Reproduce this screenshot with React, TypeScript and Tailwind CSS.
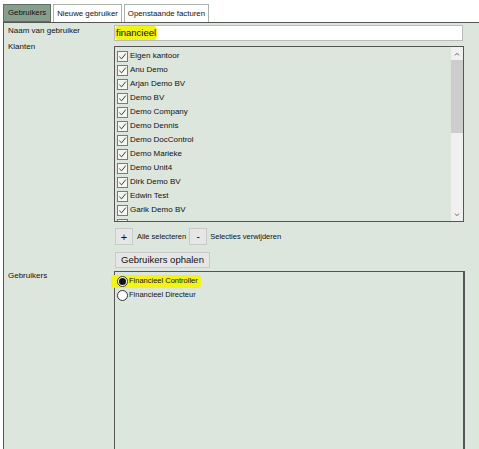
import React from 'react';

const klanten = [
  'Eigen kantoor',
  'Anu Demo',
  'Arjan Demo BV',
  'Demo BV',
  'Demo Company',
  'Demo Dennis',
  'Demo DocControl',
  'Demo Marieke',
  'Demo Unit4',
  'Dirk Demo BV',
  'Edwin Test',
  'Garik Demo BV',
];

function CheckBox() {
  return (
    <span className="flex h-[11px] w-[11px] shrink-0 items-center justify-center border border-[#7a7a7a] bg-[#f4f6f4]">
      <svg viewBox="0 0 10 10" className="h-[9px] w-[9px]">
        <path d="M1.5 5.2 L4 7.6 L8.6 1.8" fill="none" stroke="#3a3a3a" strokeWidth="1.1" />
      </svg>
    </span>
  );
}

function Radio({ checked }: { checked?: boolean }) {
  return (
    <span className="flex h-[11px] w-[11px] shrink-0 items-center justify-center rounded-full border border-[#333] bg-white">
      {checked && <span className="h-[7px] w-[7px] rounded-full bg-[#111]" />}
    </span>
  );
}

export default function App() {
  return (
    <div
      className="h-[449px] w-[479px] overflow-hidden bg-white text-[8px] leading-[12px] text-[#111]"
      style={{ fontFamily: '"Liberation Sans", Arial, sans-serif' }}
    >
      {/* tabs */}
      <div className="flex items-end gap-[2px] pl-[3px] pt-[4px] text-[7.8px]">
        <div className="flex h-[18px] items-center border border-[#5f6f62] bg-[#879e8c] px-[4px]">
          Gebruikers
        </div>
        <div className="flex h-[18px] items-center border border-b-0 border-[#a9b3aa] bg-white px-[3px]">
          Nieuwe gebruiker
        </div>
        <div className="flex h-[18px] items-center border border-b-0 border-[#a9b3aa] bg-white px-[3px]">
          Openstaande facturen
        </div>
      </div>

      {/* panel */}
      <div className="ml-[3px] flex h-[430px] flex-col border-l border-t border-[#555] bg-[#dce6dc] pt-[2px]">
        {/* naam */}
        <div className="flex">
          <div className="w-[110px] pl-[4px]">Naam van gebruiker</div>
          <div className="flex h-[16px] w-[349px] items-center border border-[#b8bcb8] bg-white">
            <span className="rounded-[4px] bg-[#f3f316] px-[1px] text-[9.5px] leading-[14px]">financieel</span>
          </div>
        </div>

        {/* klanten */}
        <div className="mt-[5px] flex">
          <div className="-mt-[5px] w-[110px] pl-[4px]">Klanten</div>
          <div className="flex h-[176px] w-[350px] border border-[#555] bg-[#dce6dc]">
            <div className="flex flex-1 flex-col overflow-hidden pl-[2px] pt-[2px]">
              {klanten.map((k) => (
                <div key={k} className="flex h-[14px] shrink-0 items-center gap-[2px]">
                  <CheckBox />
                  <span>{k}</span>
                </div>
              ))}
              <div className="flex h-[14px] shrink-0 items-center">
                <CheckBox />
              </div>
            </div>
            <div className="flex w-[12px] flex-col bg-[#f0f0f0]">
              <div className="flex h-[13px] items-center justify-center">
                <svg viewBox="0 0 8 6" className="h-[4px] w-[6px]">
                  <path d="M1 5 L4 2 L7 5" fill="none" stroke="#555" strokeWidth="1.4" />
                </svg>
              </div>
              <div className="h-[73px] bg-[#cdcdcd]" />
              <div className="flex-1" />
              <div className="flex h-[13px] items-center justify-center">
                <svg viewBox="0 0 8 6" className="h-[4px] w-[6px]">
                  <path d="M1 1 L4 4 L7 1" fill="none" stroke="#555" strokeWidth="1.4" />
                </svg>
              </div>
            </div>
          </div>
        </div>

        {/* selecteren */}
        <div className="mt-[6px] flex pl-[111px] text-[7.5px]">
          <div className="flex h-[17px] items-center">
            <button className="flex h-[17px] w-[18px] items-center justify-center border border-[#c8ccc8] bg-[#e6e6e6] text-[11px]">
              +
            </button>
            <span className="ml-[4px] mr-[3px]">Alle selecteren</span>
            <button className="flex h-[17px] w-[18px] items-center justify-center border border-[#c8ccc8] bg-[#e6e6e6] text-[10px]">
              -
            </button>
            <span className="ml-[3px]">Selecties verwijderen</span>
          </div>
        </div>

        {/* ophalen */}
        <div className="mt-[7px] flex pl-[111px]">
          <button className="flex h-[16px] items-center border border-[#c8ccc8] bg-[#e6e6e6] px-[5px] text-[9.5px]">
            Gebruikers ophalen
          </button>
        </div>

        {/* gebruikers */}
        <div className="mt-[3px] flex">
          <div className="-mt-[1px] w-[110px] pl-[4px]">Gebruikers</div>
          <div className="h-[180px] w-[351px] border border-r-2 border-[#555] bg-[#dce6dc] pt-[2px] text-[7.5px]">
            <div className="flex h-[14px] items-center">
              <div className="-ml-[4px] flex h-[13px] items-center gap-[1px] rounded-[4px] bg-[#f3f316] pl-[6px] pr-[3px]">
                <Radio checked />
                <span>Financieel Controller</span>
              </div>
            </div>
            <div className="flex h-[14px] items-center gap-[1px] pl-[2px]">
              <Radio />
              <span>Financieel Directeur</span>
            </div>
          </div>
        </div>
      </div>
    </div>
  );
}
